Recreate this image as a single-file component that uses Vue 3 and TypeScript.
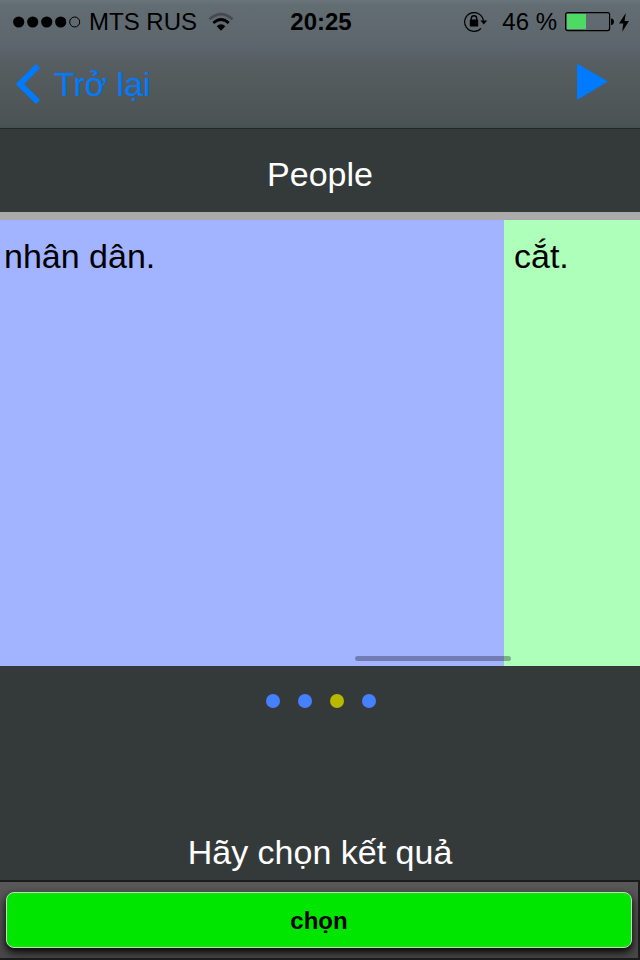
<script setup lang="ts">
import { ref } from 'vue'

interface Card {
  text: string
  tone: 'blue' | 'green'
}

const cards: Card[] = [
  { text: 'nhân dân.', tone: 'blue' },
  { text: 'cắt.', tone: 'green' },
]
const pageCount = 4
const activePage = ref(3)
const signalDots = [true, true, true, true, false]
</script>

<template>
  <div class="screen">
    <header class="top">
      <div class="status">
        <div class="status-left">
          <svg class="signal" width="68" height="12" viewBox="0 0 68 12" aria-hidden="true">
            <template v-for="(full, i) in signalDots" :key="i">
              <circle v-if="full" :cx="5.7 + i * 14" cy="6" r="5.6" fill="#000" />
              <circle v-else :cx="5.7 + i * 14" cy="6" r="5" fill="none" stroke="#000" />
            </template>
          </svg>
          <span>MTS RUS</span>
          <svg class="wifi" width="26" height="20" viewBox="0 0 26 20" aria-hidden="true">
            <path d="M1.5 7.2Q13-3 24.5 7.2" fill="none" stroke="#454b50" stroke-width="2.8" />
            <path d="M5.3 11Q13 4 20.7 11" fill="none" stroke="#000" stroke-width="2.8" />
            <path d="M8.7 14.3Q13 10.2 17.3 14.3L13 18.8Z" fill="#000" />
          </svg>
        </div>
        <time class="clock">20:25</time>
        <div class="status-right">
          <svg class="lock" width="24" height="20" viewBox="0 0 24 20" aria-hidden="true">
            <path d="M19.4 9A9.4 9.4 0 1 0 17 16.3" fill="none" stroke="#000" stroke-width="1.2" />
            <path d="M16.3 8.6H23.2L19.8 12.4Z" fill="#000" />
            <path d="M7.3 8V6.5a2.7 2.7 0 0 1 5.4 0V8" fill="none" stroke="#000" stroke-width="1.4" />
            <rect x="5.8" y="7.4" width="8.4" height="7" rx="0.5" fill="#000" />
          </svg>
          <span class="percent">46 %</span>
          <svg class="battery" width="50" height="20" viewBox="0 0 50 20" aria-hidden="true">
            <rect x="0.6" y="0.6" width="44" height="18" rx="2" fill="none" stroke="#000" stroke-width="1.2" />
            <rect x="2" y="2" width="19" height="15" fill="#4cd964" />
            <path d="M46 6.5q3 .3 3 3.300t-3 3.200Z" fill="#000" />
          </svg>
          <svg class="bolt" width="10" height="19" viewBox="0 0 10 19" aria-hidden="true">
            <path d="M6.8 0L0 10.5H4.3L3.2 18.7L10 8H5.6Z" fill="#000" />
          </svg>
        </div>
      </div>
      <nav class="nav">
        <button class="back" type="button">
          <svg width="26" height="42" viewBox="0 0 26 42" aria-hidden="true">
            <path d="M22 3L4 21L22 39" fill="none" stroke="#007aff" stroke-width="6" />
          </svg>
          <span>Trở lại</span>
        </button>
        <button class="play" type="button" aria-label="Play">
          <svg width="32" height="38" viewBox="0 0 32 38" aria-hidden="true">
            <path d="M0 0.5L31 18.5L0 37Z" fill="#007aff" />
          </svg>
        </button>
      </nav>
    </header>

    <h1 class="word">People</h1>

    <main class="cards">
      <section v-for="card in cards" :key="card.text" class="card" :class="card.tone">
        {{ card.text }}
      </section>
      <span class="scrollbar"></span>
    </main>

    <section class="controls">
      <div class="dots">
        <button
          v-for="n in pageCount"
          :key="n"
          type="button"
          class="dot"
          :class="{ active: n === activePage }"
          :aria-label="`${n}`"
          @click="activePage = n"
        ></button>
      </div>
      <p class="prompt">Hãy chọn kết quả</p>
    </section>

    <footer class="bottom">
      <button class="choose" type="button">chọn</button>
    </footer>
  </div>
</template>

<style>
body {
  margin: 0;
  background: #343a3a;
}
</style>

<style scoped>
.screen {
  display: flex;
  flex-direction: column;
  min-height: 100vh;
  background: #343a3a;
  color: #fff;
  font-family: "Liberation Sans", Arial, sans-serif;
  font-size: 34px;
  line-height: 40px;
}
button {
  margin: 0;
  padding: 0;
  border: 0;
  background: none;
  font: inherit;
  cursor: pointer;
}
svg {
  display: block;
  flex: none;
}
.top {
  border-bottom: 1px solid #222827;
  background: linear-gradient(#68747a 0, #626d72 6px, #5d666e 44px, #565e61 64px, #4b5354 124px, #465050 128px);
}
.status {
  display: grid;
  grid-template-columns: 1fr auto 1fr;
  align-items: center;
  box-sizing: border-box;
  height: 40px;
  padding: 2px 11px 0 13px;
  color: #000;
  font-size: 24px;
}
.status-left,
.status-right {
  display: flex;
  align-items: center;
  white-space: nowrap;
}
.status-left {
  gap: 8px;
}
.wifi {
  margin-left: 3px;
}
.clock {
  font-weight: bold;
}
.status-right {
  justify-content: flex-end;
}
.percent {
  margin: 0 8px 0 14px;
}
.bolt {
  margin-left: 4px;
}
.nav {
  display: flex;
  align-items: center;
  justify-content: space-between;
  height: 88px;
  padding: 0 31px 0 16px;
}
.back {
  display: flex;
  align-items: center;
  gap: 12px;
  color: #007aff;
}
.play {
  padding-bottom: 4px;
}
.word {
  margin: 0;
  padding: 25px 0 18px;
  font-size: 34px;
  font-weight: normal;
  text-align: center;
}
.cards {
  position: relative;
  display: grid;
  grid-template-columns: 1fr 136px;
  flex: 1;
  border-top: 8px solid #aaa;
  color: #000;
}
.card {
  padding: 16px 4px;
}
.green {
  padding-left: 10px;
  background: #aeffba;
}
.blue {
  background: #a2b4ff;
}
.scrollbar {
  position: absolute;
  right: 129px;
  bottom: 5px;
  width: 156px;
  height: 5px;
  border-radius: 3px;
  background: rgba(0, 0, 0, 0.3);
}
.controls {
  display: flex;
  flex-direction: column;
  justify-content: space-between;
  height: 186px;
  padding-top: 28px;
}
.dots {
  display: flex;
  justify-content: center;
  gap: 18px;
  padding-left: 2px;
}
.dot {
  width: 14px;
  height: 14px;
  border-radius: 50%;
  background: #4580ff;
}
.dot.active {
  background: #b9b900;
}
.prompt {
  margin: 0 0 8px;
  text-align: center;
}
.bottom {
  padding: 10px 6px;
  border: solid #1c1c1c;
  border-width: 2px 2px 2px 0;
  background: linear-gradient(#585858, #484848);
}
.choose {
  display: block;
  width: 100%;
  height: 56px;
  padding-top: 2px;
  border: 1px solid #c4dcc4;
  border-radius: 8px;
  background: #00e600;
  box-shadow: 0 4px 8px #000;
  color: #000;
  font-size: 24px;
  font-weight: bold;
}
</style>
